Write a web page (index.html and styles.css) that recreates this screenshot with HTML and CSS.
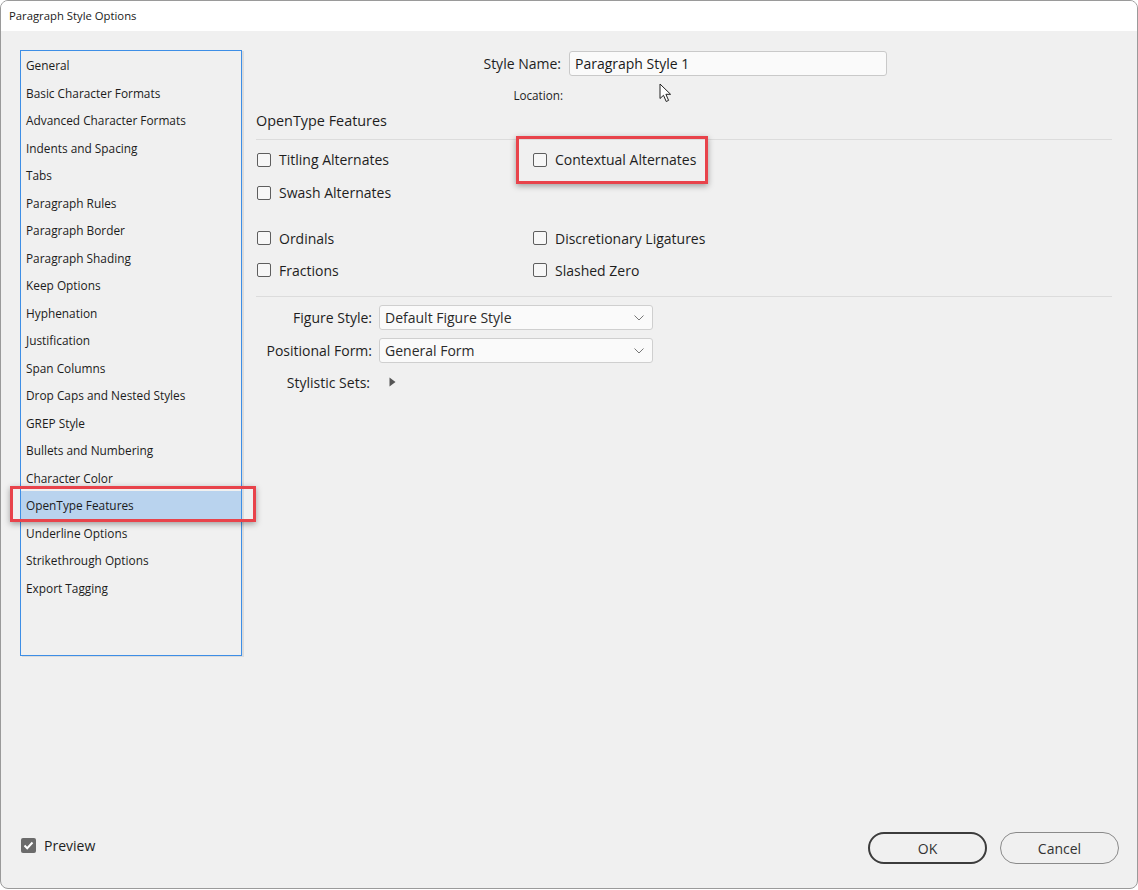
FILE: index.html
```html
<!DOCTYPE html>
<html lang="en">
<head>
    <meta charset="UTF-8">
    <title>Paragraph Style Options</title>
    <link rel="stylesheet" href="styles.css">
</head>
<body>
    <div class="dialog">
        <div class="titlebar">Paragraph Style Options</div>

        <div class="dialog-body">
            <div class="main">
                <ul class="nav">
                    <li>General</li>
                    <li>Basic Character Formats</li>
                    <li>Advanced Character Formats</li>
                    <li>Indents and Spacing</li>
                    <li>Tabs</li>
                    <li>Paragraph Rules</li>
                    <li>Paragraph Border</li>
                    <li>Paragraph Shading</li>
                    <li>Keep Options</li>
                    <li>Hyphenation</li>
                    <li>Justification</li>
                    <li>Span Columns</li>
                    <li>Drop Caps and Nested Styles</li>
                    <li>GREP Style</li>
                    <li>Bullets and Numbering</li>
                    <li>Character Color</li>
                    <li class="selected">OpenType Features</li>
                    <li>Underline Options</li>
                    <li>Strikethrough Options</li>
                    <li>Export Tagging</li>
                </ul>

                <div class="panel">
                    <div class="name-row">
                        <span class="field-label">Style Name:</span>
                        <div class="textbox">Paragraph Style 1</div>
                    </div>
                    <div class="location-row">
                        <span class="field-label small">Location:</span>
                    </div>

                    <h2 class="section-title">OpenType Features</h2>

                    <div class="features">
                        <label class="check"><span class="box"></span>Titling Alternates</label>
                        <label class="check marked"><span class="box"></span>Contextual Alternates</label>
                        <label class="check"><span class="box"></span>Swash Alternates</label>
                        <span></span>
                    </div>
                    <div class="features second">
                        <label class="check"><span class="box"></span>Ordinals</label>
                        <label class="check"><span class="box"></span>Discretionary Ligatures</label>
                        <label class="check"><span class="box"></span>Fractions</label>
                        <label class="check"><span class="box"></span>Slashed Zero</label>
                    </div>

                    <div class="selects">
                        <span class="field-label">Figure Style:</span>
                        <div class="dropdown">Default Figure Style
                            <svg class="chevron" width="10" height="6" viewBox="0 0 10 6"><path d="M0.5 0.5 L5 5 L9.5 0.5" fill="none" stroke="#777" stroke-width="1"/></svg>
                        </div>
                        <span class="field-label">Positional Form:</span>
                        <div class="dropdown">General Form
                            <svg class="chevron" width="10" height="6" viewBox="0 0 10 6"><path d="M0.5 0.5 L5 5 L9.5 0.5" fill="none" stroke="#777" stroke-width="1"/></svg>
                        </div>
                        <span class="field-label sets">Stylistic Sets:</span>
                        <div class="disclosure">
                            <svg width="7" height="10" viewBox="0 0 7 10"><path d="M0.5 0.5 L6.5 5 L0.5 9.5 Z" fill="#555"/></svg>
                        </div>
                    </div>

                    <!-- mouse pointer from the screenshot -->
                    <svg class="pointer" width="14" height="20" viewBox="0 0 14 20">
                        <path d="M1 1 L1 15.5 L4.5 12.3 L7.2 18.5 L9.6 17.4 L6.9 11.3 L11.6 11.3 Z" fill="#fff" stroke="#222" stroke-width="1" stroke-linejoin="round"/>
                    </svg>
                </div>
            </div>

            <div class="footer">
                <label class="preview"><span class="box checked">
                    <svg width="11" height="9" viewBox="0 0 11 9"><path d="M1.5 4.5 L4.2 7.2 L9.5 1.5" fill="none" stroke="#fff" stroke-width="2"/></svg>
                </span>Preview</label>
                <div class="buttons">
                    <button type="button" class="btn default">OK</button>
                    <button type="button" class="btn">Cancel</button>
                </div>
            </div>
        </div>
    </div>
</body>
</html>
```

FILE: styles.css
```css
body {
    margin: 0;
    background: #fff;
    font-family: "Open Sans", "Noto Sans", sans-serif;
    color: #222;
}
.dialog {
    width: 1138px;
    height: 889px;
    box-sizing: border-box;
    border: 1px solid #9a9a9a;
    border-radius: 8px;
    overflow: hidden;
    display: flex;
    flex-direction: column;
    background: #f0f0f0;
}
.titlebar {
    height: 30px;
    line-height: 30px;
    padding-left: 8px;
    background: #fff;
    font-size: 11.3px;
    color: #1a1a1a;
}
.dialog-body {
    flex: 1;
    display: flex;
    flex-direction: column;
}
.main {
    display: flex;
    padding: 19px 0 0 19px;
}

/* left category list */
.nav {
    list-style: none;
    margin: 0;
    padding: 0;
    width: 222px;
    height: 606px;
    box-sizing: border-box;
    border: 1px solid #3d8ee6;
    box-shadow: 2px 1px 0 #dcdcdc;
    font-size: 11.85px;
}
.nav li {
    height: 27.5px;
    line-height: 28px;
    padding-left: 5px;
    color: #1c1c1c;
    white-space: nowrap;
}
.nav li.selected {
    position: relative;
    background: #b9d3ee;
}
.nav li.selected::after {
    content: "";
    position: absolute;
    left: -11px;
    top: -5px;
    width: 246px;
    height: 36px;
    box-sizing: border-box;
    border: 3px solid #e8434b;
    box-shadow: 0 2px 6px rgba(0, 0, 0, 0.35);
}

/* right side */
.panel {
    position: relative;
    margin-left: 14px;
    width: 856px;
}
.field-label {
    font-size: 14px;
    text-align: right;
    color: #1e1e1e;
}
.field-label.small {
    font-size: 11.7px;
}
.name-row {
    display: grid;
    grid-template-columns: 305px 318px;
    column-gap: 8px;
    align-items: center;
    margin-top: 1px;
}
.textbox {
    height: 25px;
    line-height: 23px;
    box-sizing: border-box;
    border: 1px solid #c9c9c9;
    border-radius: 3px;
    background: #fafafa;
    padding-left: 5px;
    font-size: 14px;
    color: #1a1a1a;
}
.location-row {
    display: grid;
    grid-template-columns: 307px;
    margin-top: 11px;
    line-height: 16px;
}
.section-title {
    margin: 8px 0 0 0;
    font-size: 14.4px;
    font-weight: normal;
    line-height: 20px;
    padding-bottom: 8px;
    border-bottom: 1px solid #dcdcdc;
    color: #1e1e1e;
}
.features {
    display: grid;
    grid-template-columns: 276px auto;
    grid-auto-rows: 33px;
    padding-top: 3px;
}
.features.second {
    grid-auto-rows: 32px;
    padding-top: 13px;
    padding-bottom: 10px;
    border-bottom: 1px solid #dcdcdc;
}
.check {
    position: relative;
    display: flex;
    align-items: center;
    font-size: 14px;
    color: #1e1e1e;
}
.box {
    width: 14px;
    height: 14px;
    box-sizing: border-box;
    border: 1px solid #5e5e5e;
    border-radius: 2px;
    background: #f7f7f7;
    margin-left: 1px;
    margin-right: 8px;
}
.check.marked::after {
    content: "";
    position: absolute;
    left: -16px;
    top: -7px;
    width: 192px;
    height: 48px;
    box-sizing: border-box;
    border: 3px solid #e8434b;
    box-shadow: 0 2px 6px rgba(0, 0, 0, 0.35);
}
.selects {
    display: grid;
    grid-template-columns: 116px 274px;
    column-gap: 7px;
    row-gap: 8px;
    align-items: center;
    margin-top: 8px;
}
.dropdown {
    position: relative;
    height: 25px;
    line-height: 23px;
    box-sizing: border-box;
    border: 1px solid #cfcfcf;
    border-radius: 3px;
    background: #fafafa;
    padding-left: 5px;
    font-size: 14px;
    color: #2a2a2a;
}
.chevron {
    position: absolute;
    right: 8px;
    top: 9px;
}
.disclosure {
    height: 20px;
    display: flex;
    align-items: center;
    padding-left: 10px;
    margin-top: 1px;
}
.field-label.sets {
    margin-top: 1px;
    padding-right: 2px;
}
.pointer {
    position: absolute;
    left: 403px;
    top: 33px;
}

/* bottom bar */
.footer {
    margin-top: auto;
    display: flex;
    align-items: center;
    justify-content: space-between;
    padding: 0 18px 24px 20px;
}
.preview {
    display: flex;
    align-items: center;
    font-size: 14px;
    color: #1e1e1e;
    margin-bottom: 5px;
}
.preview .box {
    width: 15px;
    height: 15px;
    border: none;
    background: #6b6b6b;
    display: flex;
    align-items: center;
    justify-content: center;
    margin-left: 0;
}
.buttons {
    display: flex;
    gap: 13px;
}
.btn {
    width: 119px;
    height: 32px;
    border: 1px solid #8a8a8a;
    border-radius: 16px;
    background: #f0f0f0;
    font-family: "Open Sans", "Noto Sans", sans-serif;
    font-size: 14px;
    color: #333;
}
.btn.default {
    border: 2px solid #3c3c3c;
}
```
